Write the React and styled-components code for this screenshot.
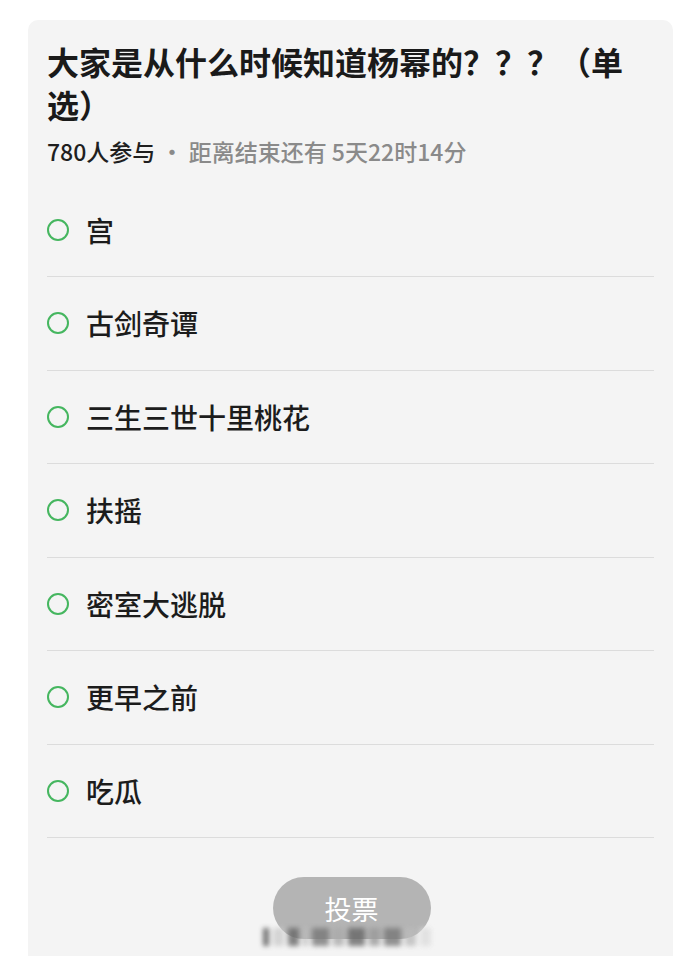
import React from "react";
import styled, { createGlobalStyle } from "styled-components";

const Global = createGlobalStyle`
  html, body { margin: 0; padding: 0; background: #ffffff; }
  body { font-family: "Noto Sans CJK SC", "Noto Sans", sans-serif; overflow: hidden; }
  * { box-sizing: border-box; }
`;

const Card = styled.div`
  margin: 20px 17px 0 28px;
  width: 645px;
  min-height: 960px;
  background: #f4f4f4;
  border-radius: 10px 10px 0 0;
  padding: 20px 19px 0 19px;
`;

const Title = styled.h1`
  margin: 0;
  font-size: 32px;
  line-height: 43px;
  font-weight: 700;
  color: #1a1a1a;
`;

const Meta = styled.div`
  margin-top: 11px;
  font-size: 23px;
  line-height: 29px;
  color: #8a8a8a;
  font-weight: 500;
`;

const Count = styled.span`
  color: #1f1f1f;
`;

const List = styled.ul`
  list-style: none;
  margin: 17.5px 0 0 0;
  padding: 0;
`;

const Row = styled.li`
  height: 93.5px;
  display: flex;
  align-items: center;
  gap: 17px;
  border-bottom: 1px solid #dcdcdc;
`;

const Radio = styled.span`
  width: 22px;
  height: 22px;
  border-radius: 50%;
  border: 2px solid #45b65f;
  flex: none;
`;

const Label = styled.span`
  font-size: 28px;
  font-weight: 500;
  color: #1c1c1c;
  line-height: 1;
  position: relative;
  top: 0px;
`;

const Footer = styled.div`
  position: relative;
  display: flex;
  justify-content: center;
  padding-top: 39px;
`;

const VoteButton = styled.button`
  width: 158px;
  height: 62px;
  border: none;
  border-radius: 31px;
  background: #b4b4b4;
  color: #ffffff;
  font-family: "Noto Sans CJK SC", sans-serif;
  font-size: 27px;
  font-weight: 400;
  margin-left: 2px;
`;

const Watermark = styled.div`
  position: absolute;
  left: 216px;
  top: 90px;
  width: 168px;
  height: 18px;
  display: flex;
  gap: 4px;
  filter: blur(2.5px);
  opacity: 0.8;
`;

const Blob = styled.span`
  flex: ${(p) => p.w};
  background: ${(p) => p.c};
`;

const options = ["宫", "古剑奇谭", "三生三世十里桃花", "扶摇", "密室大逃脱", "更早之前", "吃瓜"];
const blobs = [
  [1, "#555"], [2, "#ccc"], [2, "#666"], [1, "#bbb"], [3, "#777"], [2, "#aaa"],
  [3, "#666"], [2, "#999"], [3, "#777"], [2, "#bbb"], [2, "#ddd"],
];

export default function App() {
  return (
    <>
      <Global />
      <Card>
        <Title>大家是从什么时候知道杨幂的？？？（单选）</Title>
        <Meta>
          <Count>780人参与</Count> · 距离结束还有 5天22时14分
        </Meta>
        <List>
          {options.map((o) => (
            <Row key={o}>
              <Radio />
              <Label>{o}</Label>
            </Row>
          ))}
        </List>
        <Footer>
          <VoteButton>投票</VoteButton>
          <Watermark>
            {blobs.map(([w, c], i) => (
              <Blob key={i} w={w} c={c} />
            ))}
          </Watermark>
        </Footer>
      </Card>
    </>
  );
}
